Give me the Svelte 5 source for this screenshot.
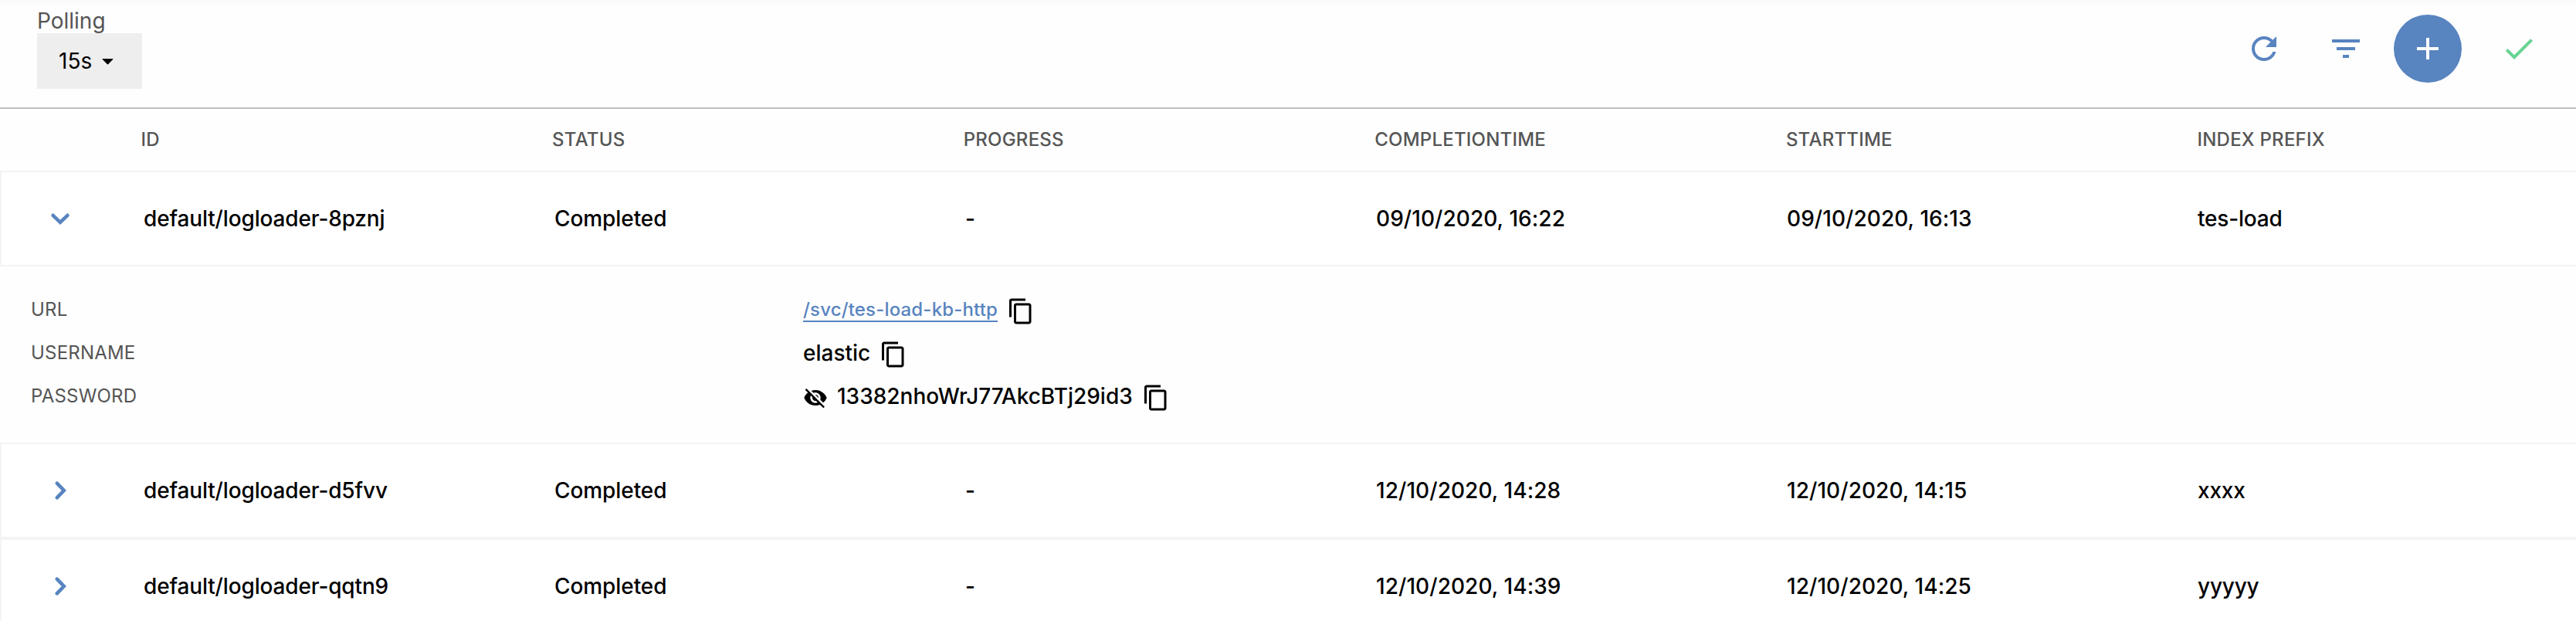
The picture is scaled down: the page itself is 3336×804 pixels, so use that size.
<script>
  const columns = ['ID', 'STATUS', 'PROGRESS', 'COMPLETIONTIME', 'STARTTIME', 'INDEX PREFIX'];

  let rows = $state([
    {
      id: 'default/logloader-8pznj', status: 'Completed', progress: '-',
      completion: '09/10/2020, 16:22', start: '09/10/2020, 16:13', prefix: 'tes-load', open: true,
      url: '/svc/tes-load-kb-http', username: 'elastic', password: '13382nhoWrJ77AkcBTj29id3'
    },
    {
      id: 'default/logloader-d5fvv', status: 'Completed', progress: '-',
      completion: '12/10/2020, 14:28', start: '12/10/2020, 14:15', prefix: 'xxxx', open: false
    },
    {
      id: 'default/logloader-qqtn9', status: 'Completed', progress: '-',
      completion: '12/10/2020, 14:39', start: '12/10/2020, 14:25', prefix: 'yyyyy', open: false
    }
  ]);
</script>

{#snippet copyIcon()}
  <svg class="copy" viewBox="0 0 24 24"><path d="M16 1H4c-1.1 0-2 .9-2 2v14h2V3h12V1zm3 4H8c-1.1 0-2 .9-2 2v14c0 1.1.9 2 2 2h11c1.1 0 2-.9 2-2V7c0-1.1-.9-2-2-2zm0 16H8V7h11v14z" /></svg>
{/snippet}

<div class="page">
  <header class="toolbar">
    <div class="polling">
      <div class="polling-label">Polling</div>
      <button class="select">
        15s
        <svg class="caret" viewBox="0 0 15 8"><path d="M1 .6h13L7.5 7.2z" stroke="#000" stroke-width="1" stroke-linejoin="round" /></svg>
      </button>
    </div>
    <div class="actions">
      <svg class="icon refresh" viewBox="0 0 24 24"><path d="M17.65 6.35C16.2 4.9 14.21 4 12 4c-4.42 0-7.99 3.58-7.99 8s3.57 8 7.99 8c3.73 0 6.84-2.55 7.73-6h-2.08c-.82 2.33-3.04 4-5.65 4-3.31 0-6-2.69-6-6s2.69-6 6-6c1.66 0 3.14.69 4.22 1.78L13 11h7V4l-2.35 2.35z" /></svg>
      <svg class="icon filter" viewBox="0 0 24 24"><path d="M10 18h4v-2h-4v2zM3 6v2h18V6H3zm3 7h12v-2H6v2z" /></svg>
      <button class="add" aria-label="Add">
        <svg class="icon" viewBox="0 0 24 24"><path d="M19 13h-6v6h-2v-6H5v-2h6V5h2v6h6v2z" /></svg>
      </button>
      <svg class="icon check" viewBox="0 0 24 24"><path d="M9 16.17L4.83 12l-1.42 1.41L9 19 21 7l-1.41-1.41z" /></svg>
    </div>
  </header>

  <div class="head">
    {#each columns as column}<div>{column}</div>{/each}
  </div>

  {#each rows as row}
    <div class="row">
      <button class="toggle" aria-label="Toggle" onclick={() => (row.open = !row.open)}>
        <svg class="chevron" class:open={row.open} viewBox="0 0 28 28"><path d="M9.8 4.6l9 9.4-9 9.4" /></svg>
      </button>
      <div class="cells">
        <div class="id">{row.id}</div>
        <div class="status">{row.status}</div>
        <div>{row.progress}</div>
        <div class="date">{row.completion}</div>
        <div class="date">{row.start}</div>
        <div class="prefix">{row.prefix}</div>
      </div>
    </div>
    {#if row.open && row.url}
      <div class="details">
        <div class="label">URL</div>
        <div class="value"><span class="link">{row.url}</span>{@render copyIcon()}</div>
        <div class="label">USERNAME</div>
        <div class="value"><span class="text">{row.username}</span>{@render copyIcon()}</div>
        <div class="label">PASSWORD</div>
        <div class="value">
          <svg class="eye" viewBox="0 0 24 24"><path d="M12 7c2.76 0 5 2.24 5 5 0 .65-.13 1.26-.36 1.83l2.92 2.92c1.51-1.26 2.7-2.89 3.43-4.75-1.73-4.39-6-7.5-11-7.5-1.4 0-2.74.25-3.98.7l2.16 2.16C10.74 7.13 11.35 7 12 7zM2 4.27l2.28 2.28.46.46C3.08 8.3 1.78 10.02 1 12c1.73 4.39 6 7.5 11 7.5 1.55 0 3.03-.3 4.38-.84l.42.42L19.73 22 21 20.73 3.27 3 2 4.27zM7.53 9.8l1.55 1.55c-.05.21-.08.43-.08.65 0 1.66 1.34 3 3 3 .22 0 .44-.03.65-.08l1.55 1.55c-.67.33-1.41.53-2.2.53-2.76 0-5-2.24-5-5 0-.79.2-1.53.53-2.2zm4.31-.78l3.15 3.15.02-.16c0-1.66-1.34-3-3-3l-.17.01z" /></svg>
          <span class="text">{row.password}</span>{@render copyIcon()}
        </div>
      </div>
    {/if}
  {/each}
</div>

<style>
  :global(body) { margin: 0; }
  .page {
    height: 804px;
    overflow: hidden;
    box-sizing: border-box;
    font-family: Inter, sans-serif;
    font-size: 28px;
    color: #000;
    background: linear-gradient(#f9f9f9, #fefefe 10px);
  }
  svg { display: block; flex: none; }
  button { font: inherit; color: inherit; border: 0; padding: 0; cursor: pointer; }

  .toolbar {
    height: 139px;
    padding: 0 50px 0 48px;
    border-bottom: 2px solid #bfbfbf;
    display: flex;
    justify-content: space-between;
    align-items: flex-start;
  }
  .polling { padding-top: 11px; }
  .polling-label { line-height: 32px; color: #555; }
  .select {
    display: flex;
    align-items: center;
    gap: 13px;
    width: 136px;
    height: 72px;
    padding-left: 28px;
    background: #eee;
  }
  .caret { width: 15px; height: 8px; margin-top: 2px; }
  .actions { display: flex; align-items: center; height: 88px; padding-top: 19px; }
  .icon { width: 48px; height: 48px; fill: #5884c0; }
  .refresh { margin-right: 58px; }
  .filter { margin-right: 38px; }
  .add {
    width: 88px;
    height: 88px;
    margin-right: 50px;
    display: grid;
    place-items: center;
    border-radius: 50%;
    background: #5884c0;
  }
  .add .icon { fill: #fff; }
  .check { fill: #67d393; }

  .head {
    display: grid;
    grid-template-columns: repeat(6, 532.6px);
    height: 80px;
    line-height: 79px;
    padding-left: 182.5px;
    font-size: 24px;
    font-weight: 550;
    letter-spacing: 0.22px;
    color: #555;
  }
  .row {
    display: flex;
    align-items: center;
    height: 124px;
    border: 2px solid #f4f4f4;
    border-right-width: 0;
    box-sizing: border-box;
    background: #fff;
    font-weight: 500;
  }
  .toggle { width: 28px; height: 28px; margin-left: 62px; background: none; }
  .chevron { width: 28px; height: 28px; fill: none; stroke: #5884c0; stroke-width: 4.6; stroke-linecap: round; }
  .chevron.open { transform: rotate(90deg); }
  .cells {
    flex: 1;
    display: grid;
    grid-template-columns: repeat(6, 532px);
    margin-left: 94px;
    line-height: 34px;
  }
  .id { letter-spacing: -0.15px; }
  .status { letter-spacing: -0.08px; }
  .date { letter-spacing: 0.06px; }
  .prefix { letter-spacing: -0.2px; }

  .details {
    display: grid;
    grid-template-columns: 1000px 1fr;
    grid-auto-rows: 56px;
    align-items: center;
    padding: 30px 40px;
  }
  .label {
    font-size: 24px;
    line-height: 29px;
    margin-bottom: 5px;
    letter-spacing: 0.2px;
    color: #555;
  }
  .value { display: flex; align-items: center; gap: 12px; font-weight: 500; }
  .text { line-height: 34px; padding-bottom: 4px; }
  .link {
    font-size: 24px;
    line-height: 29px;
    margin-bottom: 3px;
    letter-spacing: 0.17px;
    color: #5884c0;
    border-bottom: 2px solid #5884c0;
  }
  .copy { width: 36px; height: 36px; }
  .eye { width: 32px; height: 32px; }
</style>
